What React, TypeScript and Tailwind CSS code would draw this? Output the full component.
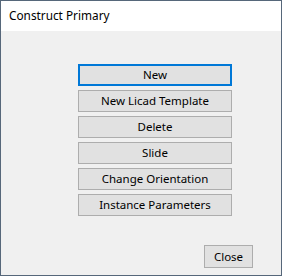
import React from "react";

const font = { fontFamily: '"Noto Sans", "Open Sans", sans-serif' };

export default function App() {
  const items = ["New Licad Template", "Delete", "Slide", "Change Orientation", "Instance Parameters"];
  return (
    <div
      className="w-[282px] h-[276px] border border-[#56677a] flex flex-col text-[11.5px] text-black"
      style={font}
    >
      <div className="h-[30px] bg-white flex items-center pl-[8px] shrink-0 text-[11.8px]">Construct Primary</div>
      <div className="flex-1 bg-[#f0f0f0] flex flex-col">
        <div className="flex flex-col gap-[4px] pt-[33px] pl-[77px]">
          <button className="w-[154px] h-[22px] bg-[#e1e1e1] border-2 border-[#0078d7] flex items-center justify-center leading-none">
            New
          </button>
          {items.map((t) => (
            <button
              key={t}
              className="w-[154px] h-[22px] bg-[#e1e1e1] border border-[#adadad] flex items-center justify-center leading-none"
            >
              {t}
            </button>
          ))}
        </div>
        <div className="mt-auto self-end mr-[28px] mb-[7px]">
          <button className="w-[49px] h-[23px] bg-[#e1e1e1] border border-[#adadad] flex items-center justify-center leading-none">
            Close
          </button>
        </div>
      </div>
    </div>
  );
}
